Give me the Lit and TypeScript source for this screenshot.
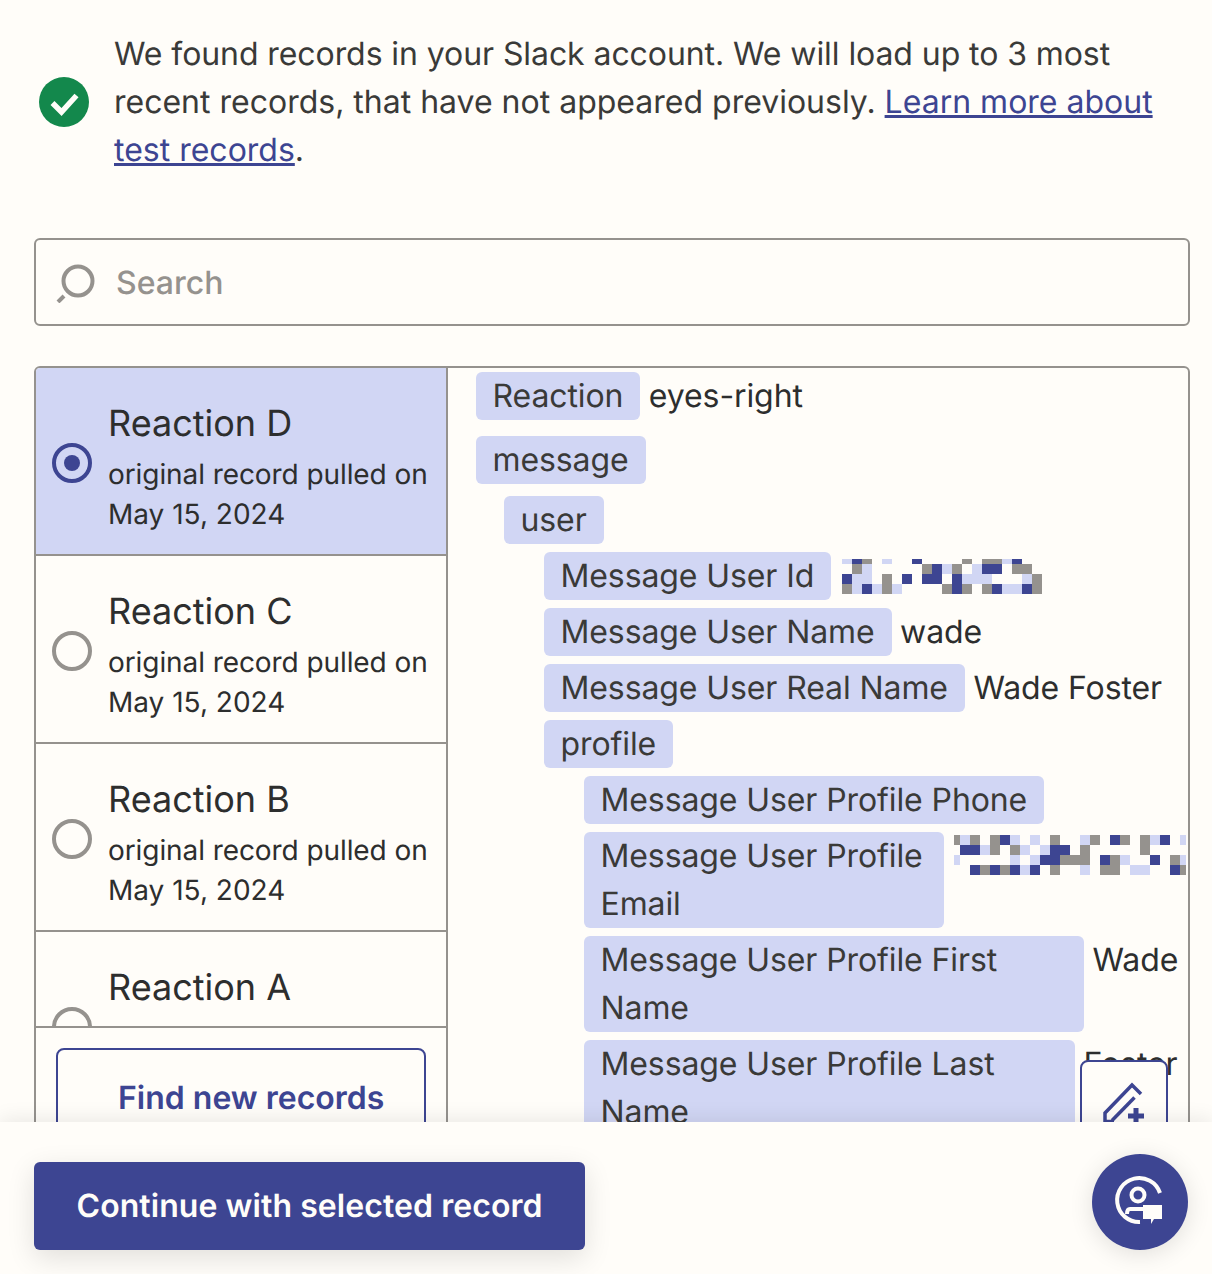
import { LitElement, html, css, svg } from "lit";
import { customElement } from "lit/decorators.js";

const COLORS: Record<string, string> = { W: "#fffdf9", L: "#d1d6f4", G: "#95928e", B: "#3d4592" };

const USER_ID = ["LBGWLWWBWWWWGWGGLBWW", "WGLWWWWWGBLGWLBBWGGW", "BLLWGWBWBBWBLLLWWWLG", "GLBLGLWWWWGBGWGBLLBG"];
const USER_ID_H = [5, 10, 10, 10];
const EMAIL = ["GLGWGBLWLWGWWLGWBGWGLBWL", "WBBLGWGLWLBBWGWWWWWGWWWW", "LWWWWWLWLBBGGGWBGLWWBWGL", "WWBGBGBLBWGWWLWGGWLLWWBG"];
const EMAIL_H = [10, 10, 10, 10];

function pixels(rows: string[], heights: number[], offset: number, width: number) {
  let y = 0;
  const rects = rows.map((r, ri) => {
    const h = heights[ri];
    const out = [...r].map((c, i) => svg`<rect x=${i * 10 - offset} y=${y} width="10.2" height=${h + 0.2} fill=${COLORS[c]} />`);
    y += h;
    return out;
  });
  return html`<svg class="pix" width=${width} height=${y} viewBox="0 0 ${width} ${y}" role="img" aria-label="redacted">${rects}</svg>`;
}

@customElement("app-root")
export class AppRoot extends LitElement {
  static styles = css`
    :host { display: block; width: 1212px; height: 1274px; position: relative; overflow: hidden; background: #fffdf9; font-family: Inter, "Liberation Sans", sans-serif; color: #3a3a38; text-rendering: geometricPrecision; }
    * { box-sizing: border-box; }
    .page { display: flex; flex-direction: column; height: 1274px; }
    .content { flex: 1; min-height: 0; overflow: hidden; padding: 30px 22px 0 34px; position: relative; }
    .notice { display: flex; align-items: center; gap: 25px; padding-left: 5px; font-size: 32px; line-height: 48px; }
    .notice svg { flex: none; }
    .notice a { color: #3d4592; text-decoration: underline; }
    .tight { letter-spacing: -0.08px; }
    .search { margin-top: 64px; height: 88px; border: 2px solid #95928e; border-radius: 6px; display: flex; align-items: center; padding-left: 19px; gap: 19px; color: #95928e; font-size: 32px; font-weight: 500; }
    .panel { margin-top: 40px; height: 800px; border: 2px solid #95928e; border-radius: 6px 6px 0 0; display: flex; overflow: hidden; }
    .left { width: 412px; flex: none; border-right: 2px solid #95928e; display: flex; flex-direction: column; }
    .list { height: 660px; overflow: hidden; border-bottom: 2px solid #95928e; }
    .rec { height: 188px; border-bottom: 2px solid #95928e; display: flex; align-items: center; padding-left: 16px; gap: 16px; color: #2d2e2e; }
    .rec.sel { background: #d1d6f4; }
    .rec svg { flex: none; margin-top: 4px; }
    .rec .t { font-size: 36px; line-height: 48px; margin-bottom: 7px; }
    .rec .s { font-size: 28px; line-height: 40px; }
    .rec .orig { letter-spacing: -0.08px; }
    .rec .txt { padding-top: 11px; white-space: nowrap; }
    .btnwrap { padding: 20px; }
    .find { width: 370px; height: 88px; border: 2px solid #3d4592; border-radius: 8px; display: flex; align-items: center; padding: 10px 0 0 60px; color: #3d4592; font-size: 32px; font-weight: 600; background: #fffdf9; }
    .right { flex: 1; min-width: 0; overflow: hidden; padding: 4px 0 0 28px; color: #2d2e2e; font-size: 32px; line-height: 48px; letter-spacing: -0.1px; }
    .row { display: flex; gap: 8.5px; align-items: flex-start; margin-top: 8px; }
    .chip { background: #d1d6f4; border-radius: 6px; padding: 0 17px 0 16.5px; color: #3a3a38; flex: none; }
    .val { flex: none; white-space: nowrap; }
    .first { margin-top: 0; }
    .m16 { margin-top: 16px; }
    .m12 { margin-top: 12px; }
    .lvl1 { padding-left: 28px; }
    .lvl2 { padding-left: 40px; }
    .w360 { width: 360px; }
    .w500 { width: 500px; }
    .w491 { width: 491px; }
    .pix { display: block; flex: none; }
    .pix1 { margin: 7px 0 0 2px; }
    .pix2 { margin: 3px 0 0 1.5px; }
    .edit { position: absolute; left: 1080px; top: 1060px; width: 88px; height: 88px; border: 2px solid #3d4592; border-radius: 8px; background: #fffdf9; display: flex; align-items: flex-start; justify-content: center; padding-top: 20px; }
    .footer { flex: none; height: 152px; background: #fffdf9; box-shadow: 0 -2px 20px rgba(0,0,0,.09); padding: 40px 34px; position: relative; z-index: 2; }
    .cont { display: inline-flex; align-items: center; height: 88px; padding: 0 42.5px 2px; background: #3d4592; color: #fffdf9; border-radius: 6px; font-size: 32px; font-weight: 600; letter-spacing: 0.07px; box-shadow: 0 8px 28px rgba(0,0,0,.12); white-space: nowrap; }
    .fab { position: absolute; left: 1092px; top: 1154px; width: 96px; height: 96px; border-radius: 50%; background: #3d4592; box-shadow: 0 4px 24px rgba(0,0,0,.12); z-index: 3; }
    .fab svg { display: block; }
  `;

  radio(sel: boolean) {
    return html`<svg width="40" height="40" viewBox="0 0 40 40">
      <circle cx="20" cy="20" r="18" fill="none" stroke=${sel ? "#3d4592" : "#95928e"} stroke-width="4" />
      ${sel ? svg`<circle cx="20" cy="20" r="8" fill="#3d4592" />` : ""}
    </svg>`;
  }

  rec(name: string, sel = false) {
    return html`<div class="rec ${sel ? "sel" : ""}">
      ${this.radio(sel)}
      <div class="txt">
        <div class="t">${name}</div>
        <div class="s orig">original record pulled on</div>
        <div class="s">May 15, 2024</div>
      </div>
    </div>`;
  }

  render() {
    return html`
      <div class="page">
        <div class="content">
          <div class="notice">
            <svg width="50" height="50" viewBox="0 0 50 50">
              <circle cx="25" cy="25" r="25" fill="#13884c" />
              <path d="M13.500 26l9 9 15-16.500" fill="none" stroke="#fffdf9" stroke-width="5.500" />
            </svg>
            <div><span class="tight">We found records in your Slack account. We will load up to 3 most</span> recent records, that have not appeared previously. <a href="#">Learn more about test records</a>.</div>
          </div>
          <div class="search">
            <svg width="42" height="42" viewBox="0 0 42 42">
              <circle cx="23" cy="20" r="14.5" fill="none" stroke="#95928e" stroke-width="4" />
              <path d="M3 41l6-6" fill="none" stroke="#95928e" stroke-width="4" />
            </svg>
            <span>Search</span>
          </div>
          <div class="panel">
            <div class="left">
              <div class="list">
                ${this.rec("Reaction D", true)}
                ${this.rec("Reaction C")}
                ${this.rec("Reaction B")}
                ${this.rec("Reaction A")}
              </div>
              <div class="btnwrap"><div class="find">Find new records</div></div>
            </div>
            <div class="right">
              <div class="row first"><div class="chip">Reaction</div><div class="val">eyes-right</div></div>
              <div class="row m16"><div class="chip">message</div></div>
              <div class="lvl1">
                <div class="row m12"><div class="chip">user</div></div>
                <div class="lvl2">
                  <div class="row"><div class="chip">Message User Id</div><div class="pix1">${pixels(USER_ID, USER_ID_H, 0, 200)}</div></div>
                  <div class="row"><div class="chip">Message User Name</div><div class="val">wade</div></div>
                  <div class="row"><div class="chip">Message User Real Name</div><div class="val">Wade Foster</div></div>
                  <div class="row"><div class="chip">profile</div></div>
                  <div class="lvl2">
                    <div class="row"><div class="chip">Message User Profile Phone</div></div>
                    <div class="row"><div class="chip w360">Message User Profile Email</div><div class="pix2">${pixels(EMAIL, EMAIL_H, 4, 232)}</div></div>
                    <div class="row"><div class="chip w500">Message User Profile First Name</div><div class="val">Wade</div></div>
                    <div class="row"><div class="chip w491">Message User Profile Last Name</div><div class="val">Foster</div></div>
                  </div>
                </div>
              </div>
            </div>
          </div>
          <div class="edit">
            <svg width="48" height="48" viewBox="0 0 48 48">
              <path d="M41 12l-9-9L5 31v10" fill="none" stroke="#3d4592" stroke-width="3.500" />
              <path d="M34.500 15.500L12 38.500" fill="none" stroke="#3d4592" stroke-width="3.500" />
              <path d="M4 39.500H14" fill="none" stroke="#3d4592" stroke-width="3.500" />
              <path d="M36 26v16M28 34h16" fill="none" stroke="#3d4592" stroke-width="5" />
            </svg>
          </div>
        </div>
        <div class="footer"><div class="cont">Continue with selected record</div></div>
      </div>
      <div class="fab">
        <svg width="96" height="96" viewBox="0 0 96 96">
          <path d="M68 39A22 22 0 1 0 48 68" fill="none" stroke="#fffdf9" stroke-width="4" />
          <circle cx="46" cy="41" r="6.5" fill="none" stroke="#fffdf9" stroke-width="4" />
          <path d="M51 55H38q-3 0-3 5" fill="none" stroke="#fffdf9" stroke-width="4" />
          <path d="M51 51h19v14H62l-3 5v-5H51z" fill="#fffdf9" />
        </svg>
      </div>
    `;
  }
}
